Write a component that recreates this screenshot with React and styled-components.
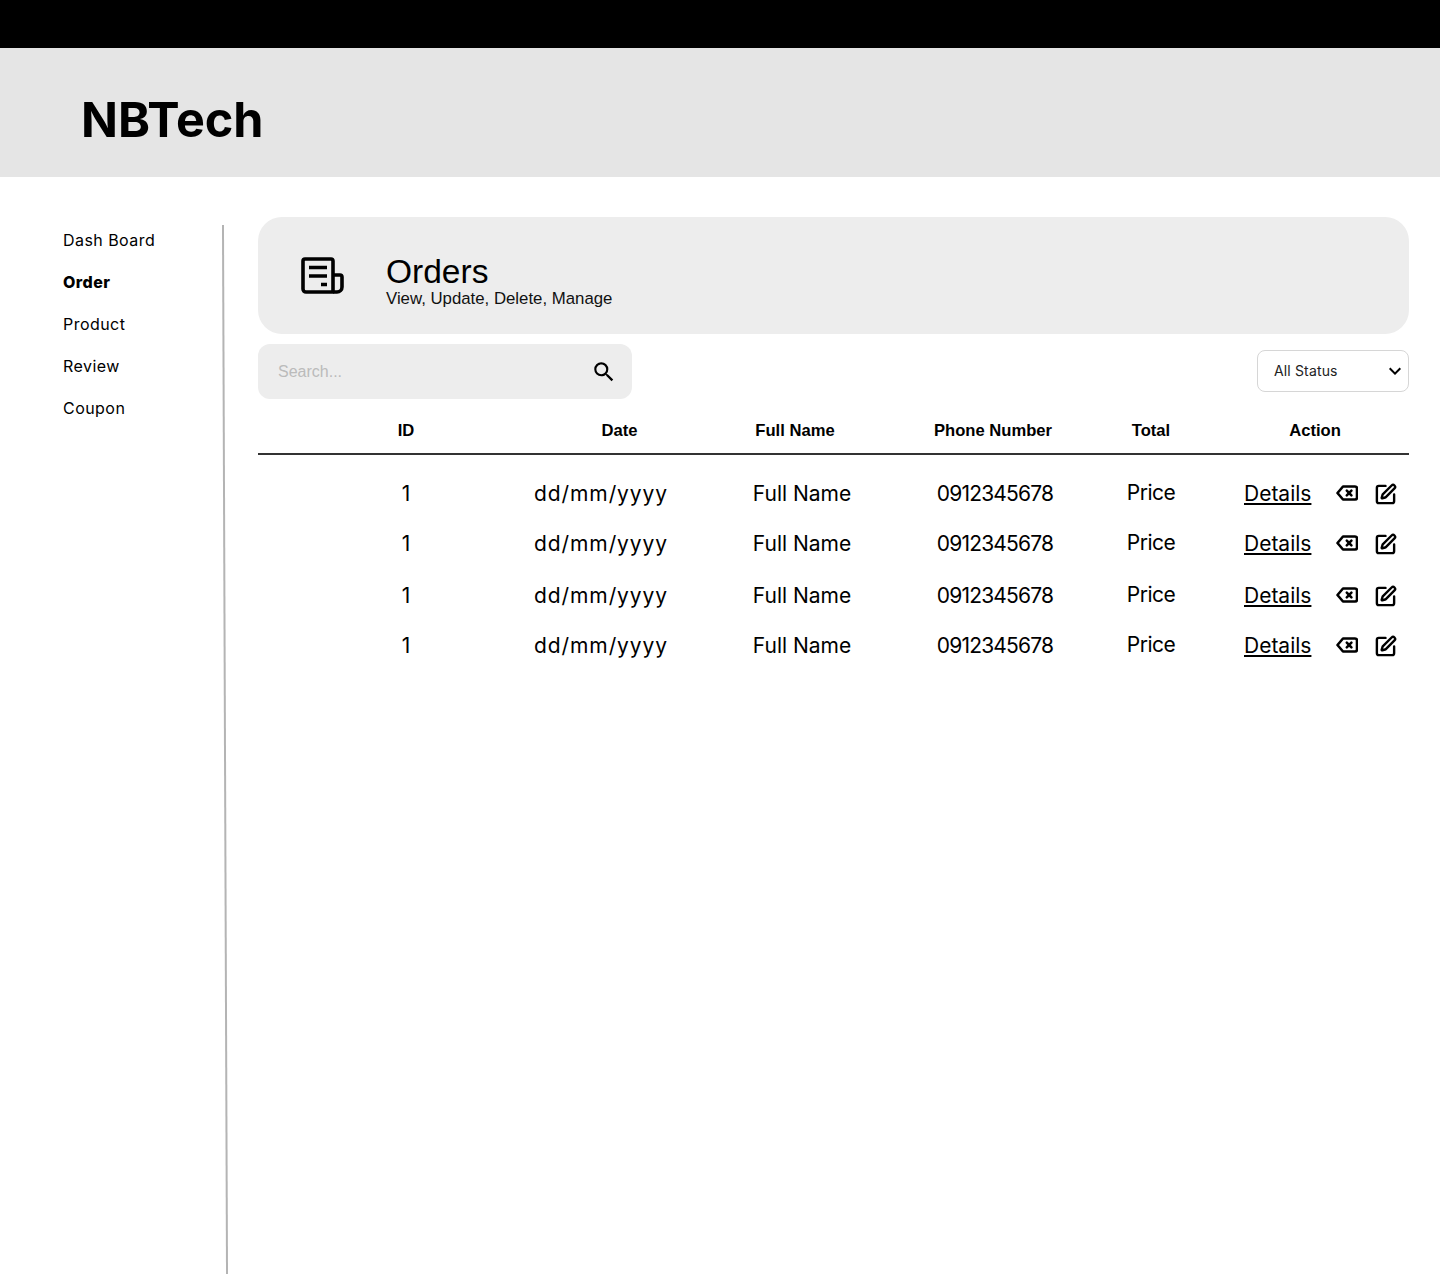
import React from "react";
import styled, { createGlobalStyle } from "styled-components";
import { MdSearch, MdKeyboardArrowDown } from "react-icons/md";
import { LuSquarePen } from "react-icons/lu";

const GlobalStyle = createGlobalStyle`
  html, body { margin: 0; padding: 0; background: #fff; }
  body { font-family: "Inter", "Liberation Sans", sans-serif; color: #000; }
  * { box-sizing: border-box; }
`;

const Page = styled.div`
  width: 1440px;
  height: 1274px;
  overflow: hidden;
  display: flex;
  flex-direction: column;
`;
const TopBar = styled.div`
  height: 48px;
  background: #000;
`;
const Header = styled.header`
  height: 129px;
  background: #e5e5e5;
  padding: 16px 81px 0;
  display: flex;
  align-items: center;
`;
const Logo = styled.h1`
  margin: 0;
  font-size: 48.5px;
  font-weight: 700;
  line-height: 1;
`;
const Body = styled.div`
  flex: 1;
  display: flex;
  min-height: 0;
`;
const Sidebar = styled.nav`
  width: 258px;
  padding: 48px 0 0 63px;
  position: relative;
  &::after {
    content: "";
    position: absolute;
    top: 48px;
    bottom: -1px;
    left: 224px;
    width: 2px;
    background: #b4b4b4;
    transform: rotate(-0.22deg);
  }
`;
const NavItem = styled.a`
  display: block;
  height: 42px;
  line-height: 30px;
  font-size: 16px;
  letter-spacing: 0.45px;
  font-weight: ${(p) => (p.$active ? 800 : 400)};
`;
const Main = styled.main`
  width: 1151px;
  padding-top: 40px;
`;
const Banner = styled.section`
  height: 117px;
  background: #ededed;
  border-radius: 24px;
  display: flex;
  align-items: center;
  padding-left: 42px;
`;
const BannerText = styled.div`
  margin-left: 42px;
  font-family: "Liberation Sans", Arial, sans-serif;
  padding-top: 12px;
`;
const BannerTitle = styled.h2`
  margin: 0;
  font-size: 33.5px;
  font-weight: 400;
  line-height: 32px;
`;
const BannerSub = styled.p`
  margin: 2px 0 0;
  font-size: 16.8px;
  line-height: 18px;
  color: #111;
`;
const Toolbar = styled.div`
  margin-top: 10px;
  height: 55px;
  display: flex;
  justify-content: space-between;
  align-items: center;
`;
const Search = styled.div`
  width: 374px;
  height: 55px;
  background: #ededed;
  border-radius: 12px;
  display: flex;
  align-items: center;
  justify-content: space-between;
  padding: 0 15px 0 20px;
  font-family: "Liberation Sans", Arial, sans-serif;
  font-size: 16px;
  color: #bbb;
`;
const Select = styled.div`
  width: 152px;
  height: 42px;
  margin-bottom: 2px;
  border: 1px solid #d6d6d6;
  border-radius: 8px;
  display: flex;
  align-items: center;
  justify-content: space-between;
  padding: 0 1px 0 16px;
  font-size: 14px;
  letter-spacing: 0.15px;
  color: #222;
`;
const HeadRow = styled.div`
  height: 56px;
  padding-top: 10px;
  display: grid;
  grid-template-columns: 296px 131px 220px 176px 140px 188px;
  align-items: center;
  border-bottom: 2px solid #333;
  font-family: "Liberation Sans", Arial, sans-serif;
  font-weight: 700;
  font-size: 16.6px;
`;
const HeadCell = styled.div`
  text-align: center;
  white-space: nowrap;
`;
const Rows = styled.div`
  padding-top: 13px;
`;
const DataRow = styled.div`
  height: 50px;
  padding-left: 36px;
  display: grid;
  grid-template-columns: 224px 166px 236px 150px 162px 1fr;
  align-items: center;
  font-size: 21px;
  &:nth-child(2) {
    margin-bottom: 2px;
  }
`;
const DataCell = styled.div`
  text-align: center;
  white-space: nowrap;
  letter-spacing: ${(p) => p.$spacing || 0}px;
`;
const Price = styled(DataCell)`
  padding-bottom: 2px;
`;
const Actions = styled.div`
  display: flex;
  align-items: center;
  padding-left: 12px;
`;
const Details = styled.a`
  width: 68px;
  margin-right: 24px;
  padding-top: 1px;
  text-decoration: underline;
  text-decoration-thickness: 1.5px;
  text-underline-offset: 2px;
`;
const IconGroup = styled.div`
  display: flex;
  align-items: center;
  gap: 16px;
`;
const EditIcon = styled(LuSquarePen)`
  margin-top: 2px;
`;

const NewsIcon = () => (
  <svg width="44" height="40" viewBox="0 0 44 40" fill="none" stroke="#000" strokeWidth="3.6" strokeLinejoin="round">
    <path d="M5 3h26a2 2 0 0 1 2 2v31H6a3 3 0 0 1-3-3V5a2 2 0 0 1 2-2z" />
    <path d="M33 19h7a2 2 0 0 1 2 2v10a5 5 0 0 1-5 5h-4" />
    <path d="M9 11.5h18M9 20h18M21 28.5h6" />
  </svg>
);

const BackspaceIcon = () => (
  <svg width="22" height="18" viewBox="0 0 22 18" fill="none" stroke="#000" strokeWidth="2.6" strokeLinejoin="round" strokeLinecap="round">
    <path d="M7 2.5h12a2 2 0 0 1 2 2v9a2 2 0 0 1-2 2H7L1.5 9z" />
    <path d="M10.8 6.7l4.6 4.6M15.4 6.7l-4.6 4.6" />
  </svg>
);

const navItems = ["Dash Board", "Order", "Product", "Review", "Coupon"];
const rowsData = [0, 1, 2, 3];

const App = () => (
  <>
    <GlobalStyle />
    <Page>
      <TopBar />
      <Header>
        <Logo>NBTech</Logo>
      </Header>
      <Body>
        <Sidebar>
          {navItems.map((n) => (
            <NavItem key={n} $active={n === "Order"}>{n}</NavItem>
          ))}
        </Sidebar>
        <Main>
          <Banner>
            <NewsIcon />
            <BannerText>
              <BannerTitle>Orders</BannerTitle>
              <BannerSub>View, Update, Delete, Manage</BannerSub>
            </BannerText>
          </Banner>
          <Toolbar>
            <Search>
              Search...
              <MdSearch size={26} color="#000" />
            </Search>
            <Select>
              All Status
              <MdKeyboardArrowDown size={24} color="#000" />
            </Select>
          </Toolbar>
          <HeadRow>
            <HeadCell>ID</HeadCell>
            <HeadCell>Date</HeadCell>
            <HeadCell>Full Name</HeadCell>
            <HeadCell>Phone Number</HeadCell>
            <HeadCell>Total</HeadCell>
            <HeadCell>Action</HeadCell>
          </HeadRow>
          <Rows>
            {rowsData.map((i) => (
              <DataRow key={i}>
                <DataCell>1</DataCell>
                <DataCell $spacing={0.9}>dd/mm/yyyy</DataCell>
                <DataCell>Full Name</DataCell>
                <DataCell $spacing={-0.8}>0912345678</DataCell>
                <Price $spacing={-0.5}>Price</Price>
                <Actions>
                  <Details>Details</Details>
                  <IconGroup>
                    <BackspaceIcon />
                    <EditIcon size={23} strokeWidth={2.5} />
                  </IconGroup>
                </Actions>
              </DataRow>
            ))}
          </Rows>
        </Main>
      </Body>
    </Page>
  </>
);

export default App;
